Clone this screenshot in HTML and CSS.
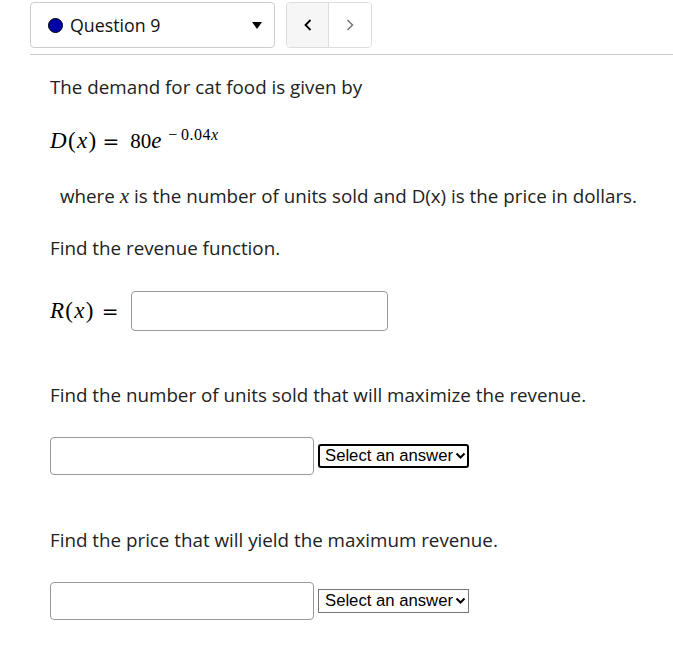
FILE: index.html
```html
<!DOCTYPE html>
<html>
<head>
<meta charset="utf-8">
<link rel="stylesheet" href="styles.css">
</head>
<body>
<div class="header">
  <div class="qselect">
    <span class="dot"></span>
    <span class="qlabel">Question 9</span>
    <svg class="caret" width="12" height="10" viewBox="0 0 12 10"><path d="M1 2 L11 2 L6 9 Z" fill="#000"/></svg>
  </div>
  <div class="nav">
    <button class="navbtn prev"><svg width="10" height="14" viewBox="0 0 10 14"><path d="M7.5 2 L2.5 7 L7.5 12" fill="none" stroke="#000" stroke-width="1.8"/></svg></button>
    <button class="navbtn next"><svg width="10" height="14" viewBox="0 0 10 14"><path d="M2.5 2 L7.5 7 L2.5 12" fill="none" stroke="#777" stroke-width="1.5"/></svg></button>
  </div>
</div>
<div class="rule"></div>
<div class="content">
  <p class="t1">The demand for cat food is given by</p>
  <div class="math eq1"><span class="fn"><span class="mi">D</span>(<span class="mi">x</span>)</span><span class="eqs">=</span><span class="num">80</span><span class="mi ee">e</span><sup class="exp"><span class="minus">&minus;</span>0.04<span class="mi">x</span></sup></div>
  <p class="t2">where <span class="ix">x</span> is the number of units sold and D(x) is the price in dollars.</p>
  <p class="t3">Find the revenue function.</p>
  <div class="rrow">
    <div class="math"><span class="fn"><span class="mi">R</span>(<span class="mi">x</span>)</span><span class="eqs">=</span></div>
    <div class="input rinput"></div>
  </div>
  <p class="t4">Find the number of units sold that will maximize the revenue.</p>
  <div class="arow">
    <div class="input ainput"></div>
    <div class="sel focused">Select an answer<svg width="11" height="8" viewBox="0 0 11 8"><path d="M1.5 1.5 L5.5 5.5 L9.5 1.5" fill="none" stroke="#000" stroke-width="2"/></svg></div>
  </div>
  <p class="t5">Find the price that will yield the maximum revenue.</p>
  <div class="arow">
    <div class="input ainput"></div>
    <div class="sel">Select an answer<svg width="11" height="8" viewBox="0 0 11 8"><path d="M1.5 1.5 L5.5 5.5 L9.5 1.5" fill="none" stroke="#000" stroke-width="2"/></svg></div>
  </div>
</div>
</body>
</html>
```
FILE: styles.css
```css
body {
  margin: 0;
  font-family: "Open Sans", sans-serif;
  color: #222;
  background: #fff;
  width: 673px;
  height: 648px;
  overflow: hidden;
}
.header {
  display: flex;
  gap: 11px;
  padding: 2px 0 0 30px;
  height: 46px;
}
.qselect {
  width: 243px;
  height: 44px;
  border: 1px solid #ccc;
  border-radius: 4px;
  display: flex;
  align-items: center;
}
.dot {
  width: 13px;
  height: 13px;
  border-radius: 50%;
  background: #0000a8;
  border: 1px solid #000;
  margin-left: 17px;
  margin-right: 7px;
}
.qlabel {
  font-size: 17.8px;
  color: #111;
  flex: 1;
}
.caret {
  margin-right: 11px;
}
.nav {
  display: flex;
  border: 1px solid #ddd;
  border-radius: 4px;
  height: 44px;
  overflow: hidden;
}
.navbtn {
  width: 42px;
  height: 44px;
  border: 0;
  padding: 0;
  margin: 0;
  background: #fff;
  display: flex;
  align-items: center;
  justify-content: center;
}
.navbtn.prev {
  background: #f6f6f6;
  border-right: 1px solid #ddd;
}
.rule {
  margin: 6px 0 0 30px;
  height: 1px;
  background: #ccc;
}
.content {
  padding-left: 50px;
  font-size: 18.8px;
}
.content p {
  margin: 0;
  line-height: 26px;
}
.t1 { margin-top: 19px !important; }
.math {
  font-family: "Liberation Serif", serif;
  color: #000;
  display: flex;
  align-items: baseline;
}
.fn {
  font-size: 23px;
  letter-spacing: 1.3px;
}
.mi { font-style: italic; }
.eqs {
  font-family: "DejaVu Sans", sans-serif;
  font-size: 20px;
  margin: 0 11px 0 5px;
}
.num { font-size: 21px; }
.ee { font-size: 23px; }
.exp {
  font-size: 16px;
  line-height: 0;
  position: relative;
  top: -8px;
  margin-left: 7px;
  letter-spacing: 0.5px;
}
.minus { margin-right: 3px; }
.eq1 {
  margin-top: 26px;
  height: 30px;
  line-height: 30px;
}
.t2 { margin-top: 27px !important; padding-left: 10px; }
.ix { font-family: "Liberation Serif", serif; font-style: italic; font-size: 21px; color: #222; }
.t3 { margin-top: 26px !important; }
.rrow {
  display: flex;
  align-items: center;
  margin-top: 30px;
  height: 40px;
}
.rrow .eqs { margin-left: 7px; margin-right: 12px; }
.input {
  border: 1px solid #999;
  border-radius: 4px;
  background: #fff;
  box-sizing: border-box;
}
.rinput {
  width: 257px;
  height: 40px;
}
.t4 { margin-top: 51px !important; }
.arow {
  display: flex;
  align-items: center;
  gap: 4px;
  margin-top: 29px;
  height: 38px;
}
.ainput {
  width: 264px;
  height: 38px;
}
.sel {
  box-sizing: border-box;
  width: 151px;
  height: 24px;
  border: 1px solid #767676;
  font-family: "Liberation Sans", Arial, sans-serif;
  font-size: 16.7px;
  color: #000;
  display: flex;
  align-items: center;
  justify-content: space-between;
  padding: 0 2px 0 6px;
}
.sel.focused {
  border: 2px solid #000;
  border-radius: 3px;
  padding-left: 5px;
  padding-right: 1px;
}
.t5 { margin-top: 52px !important; }
```
